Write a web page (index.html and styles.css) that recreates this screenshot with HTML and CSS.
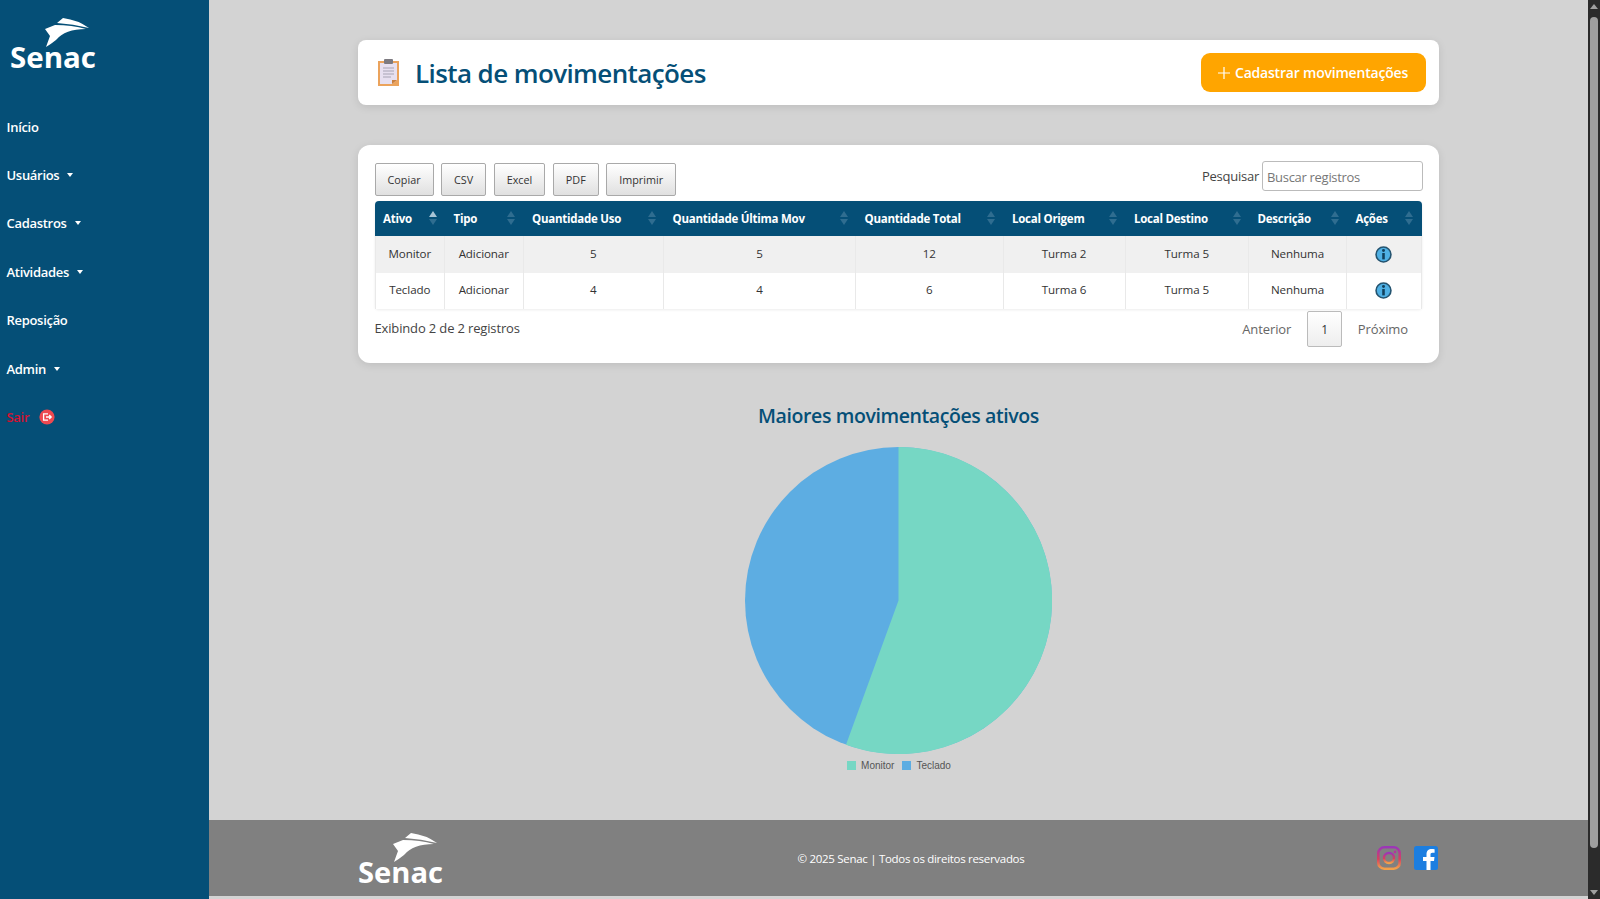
FILE: index.html
```html
<!DOCTYPE html>
<html lang="pt-BR">
<head>
    <meta charset="UTF-8">
    <meta name="viewport" content="width=device-width, initial-scale=1.0">
    <title>Lista de movimentações</title>
    <link rel="stylesheet" href="styles.css">
</head>
<body>
    <aside class="sidebar">
        <div class="sidebar-logo">
            <svg class="logo" viewBox="0 0 90 61" width="90" height="61">
                <path d="M47 6 L53 1 Q68 3 79 11 Q63 7 47 6 Z" fill="#fff"/>
                <path d="M35 12 L45 8 Q62 8 76 12 Q55 12 46 23 Q41 27 36 30 L40 19 Z" fill="#fff"/>
                <text x="0" y="51" font-size="29" textLength="86" lengthAdjust="spacingAndGlyphs" class="logo-text">Senac</text>
            </svg>
        </div>
        <nav class="nav">
            <a class="nav-link">Início</a>
            <a class="nav-link caret">Usuários</a>
            <a class="nav-link caret">Cadastros</a>
            <a class="nav-link caret">Atividades</a>
            <a class="nav-link">Reposição</a>
            <a class="nav-link caret">Admin</a>
            <a class="nav-link nav-exit">Sair
                <svg viewBox="0 0 16 16" width="16" height="16">
                    <circle cx="8" cy="8" r="7.6" fill="#ee4950"/>
                    <path d="M9 4.8H4.6v6.4H9M7 8h5M10.2 6l2 2-2 2" fill="none" stroke="#fff" stroke-width="1.3"/>
                </svg>
            </a>
        </nav>
    </aside>

    <div class="main">
        <div class="content">
            <div class="card title-card">
                <div class="title-left">
                    <svg viewBox="0 0 21 27" width="21" height="27">
                        <rect x="0" y="2" width="21" height="25" fill="#eba35c"/>
                        <path d="M2 4H19V21L14 25H2Z" fill="#e7e0f0"/>
                        <path d="M14 25L19 21H14Z" fill="#c9803f"/>
                        <rect x="6" y="0" width="9" height="5" rx="1" fill="#7d7a80"/>
                        <path d="M5 9H16M5 12H16M5 15H16M5 18H13" stroke="#a7a4b4" stroke-width="1"/>
                    </svg>
                    <h1>Lista de movimentações</h1>
                </div>
                <button class="btn-add">
                    <svg viewBox="0 0 12 12" width="12" height="12"><path d="M6 0V12M0 6H12" stroke="#fff" stroke-width="1.2"/></svg>
                    Cadastrar movimentações
                </button>
            </div>

            <div class="card table-card">
                <div class="toolbar">
                    <div class="export-buttons">
                        <button class="btn-export">Copiar</button>
                        <button class="btn-export">CSV</button>
                        <button class="btn-export">Excel</button>
                        <button class="btn-export">PDF</button>
                        <button class="btn-export">Imprimir</button>
                    </div>
                    <label class="search">Pesquisar <input type="text" placeholder="Buscar registros"></label>
                </div>

                <table class="data-table">
                    <colgroup>
                        <col class="col-1"><col class="col-2"><col class="col-3"><col class="col-4"><col class="col-5">
                        <col class="col-6"><col class="col-7"><col class="col-8"><col class="col-9">
                    </colgroup>
                    <thead>
                        <tr>
                            <th class="sorted">Ativo</th>
                            <th>Tipo</th>
                            <th>Quantidade Uso</th>
                            <th>Quantidade Última Mov</th>
                            <th>Quantidade Total</th>
                            <th>Local Origem</th>
                            <th>Local Destino</th>
                            <th>Descrição</th>
                            <th>Ações</th>
                        </tr>
                    </thead>
                    <tbody>
                        <tr class="odd">
                            <td>Monitor</td><td>Adicionar</td><td>5</td><td>5</td><td>12</td><td>Turma 2</td><td>Turma 5</td><td>Nenhuma</td>
                            <td><svg class="info" viewBox="0 0 16 16" width="17" height="17"><circle cx="8" cy="8" r="7" fill="#4fb0e4" stroke="#24536f" stroke-width="1.5"/><circle cx="8" cy="4.3" r="1.4" fill="#123f5a"/><rect x="6.8" y="6.6" width="2.4" height="6" fill="#123f5a"/></svg></td>
                        </tr>
                        <tr>
                            <td>Teclado</td><td>Adicionar</td><td>4</td><td>4</td><td>6</td><td>Turma 6</td><td>Turma 5</td><td>Nenhuma</td>
                            <td><svg class="info" viewBox="0 0 16 16" width="17" height="17"><circle cx="8" cy="8" r="7" fill="#4fb0e4" stroke="#24536f" stroke-width="1.5"/><circle cx="8" cy="4.3" r="1.4" fill="#123f5a"/><rect x="6.8" y="6.6" width="2.4" height="6" fill="#123f5a"/></svg></td>
                        </tr>
                    </tbody>
                </table>

                <div class="table-foot">
                    <span class="table-info">Exibindo 2 de 2 registros</span>
                    <div class="pagination">
                        <span>Anterior</span>
                        <span class="page-current">1</span>
                        <span>Próximo</span>
                    </div>
                </div>
            </div>

            <h2 class="chart-title">Maiores movimentações ativos</h2>
            <svg class="pie" viewBox="0 0 307 307" width="307" height="307">
                <circle cx="153.5" cy="153.5" r="153.5" fill="#5dade2"/>
                <path d="M153.5 153.5V0A153.5 153.5 0 1 1 101 297.7Z" fill="#76d7c4"/>
            </svg>
            <div class="legend">
                <span class="legend-item"><i class="swatch swatch-green"></i>Monitor</span>
                <span class="legend-item"><i class="swatch swatch-blue"></i>Teclado</span>
            </div>
        </div>

        <footer class="footer">
            <div class="footer-inner">
                <svg class="logo footer-logo" viewBox="0 0 90 61" width="90" height="61">
                    <path d="M47 6 L53 1 Q68 3 79 11 Q63 7 47 6 Z" fill="#fff"/>
                    <path d="M35 12 L45 8 Q62 8 76 12 Q55 12 46 23 Q41 27 36 30 L40 19 Z" fill="#fff"/>
                    <text x="0" y="51" font-size="29" textLength="85" lengthAdjust="spacingAndGlyphs" class="logo-text">Senac</text>
                </svg>
                <span class="copyright">© 2025 Senac | Todos os direitos reservados</span>
                <div class="social">
                    <svg viewBox="0 0 24 24" width="24" height="24">
                        <defs>
                            <linearGradient id="ig" x1="0" y1="0" x2="0" y2="1">
                                <stop offset="0" stop-color="#9b36b7"/>
                                <stop offset="0.55" stop-color="#d8405f"/>
                                <stop offset="1" stop-color="#f2a14a"/>
                            </linearGradient>
                        </defs>
                        <rect x="1.3" y="1.3" width="21.4" height="21.4" rx="6" fill="none" stroke="url(#ig)" stroke-width="2.6"/>
                        <circle cx="12" cy="12" r="5" fill="none" stroke="url(#ig)" stroke-width="2.4"/>
                        <circle cx="18" cy="6" r="1.4" fill="#b4359e"/>
                    </svg>
                    <svg viewBox="0 0 24 24" width="24" height="24">
                        <rect width="24" height="24" rx="2.5" fill="#1c7ee0"/>
                        <path d="M16.5 24V15H20L20.5 11H16.5V8.6C16.5 7.4 17 6.7 18.4 6.7H20.6V3.2C20 3.1 18.8 3 17.6 3 14.6 3 12.5 4.8 12.5 8.1V11H9V15H12.5V24Z" fill="#fff"/>
                    </svg>
                </div>
            </div>
        </footer>
    </div>

    <div class="scrollbar">
        <span class="arrow-up"></span>
        <span class="thumb"></span>
        <span class="arrow-down"></span>
    </div>
</body>
</html>
```

FILE: styles.css
```css
* {
    box-sizing: border-box;
}
html, body {
    height: 899px;
    margin: 0;
    overflow: hidden;
}
body {
    display: flex;
    font-family: "Open Sans", "Noto Sans", Arial, sans-serif;
    background-color: #d3d3d3;
    color: #333;
}

/* menu lateral */
.sidebar {
    width: 208.5px;
    flex-shrink: 0;
    background-color: #054f77;
}
.sidebar-logo {
    height: 102.4px;
    padding: 17px 0 0 10px;
}
.logo {
    display: block;
}
.logo-text {
    font-family: "Open Sans", Arial, sans-serif;
    font-weight: 700;
    fill: #fff;
}
.nav {
    display: flex;
    flex-direction: column;
}
.nav-link {
    display: flex;
    align-items: center;
    height: 48.4px;
    padding-left: 6.5px;
    font-size: 13px;
    letter-spacing: -0.3px;
    font-weight: 600;
    color: #fff;
}
.caret::after {
    content: "";
    margin-left: 8px;
    border-top: 4px solid #fff;
    border-left: 3.5px solid transparent;
    border-right: 3.5px solid transparent;
}
.nav-exit {
    color: #d21230;
    gap: 10px;
}
.nav-exit svg {
    margin-top: 1px;
}

/* area principal */
.main {
    flex: 1;
    display: flex;
    flex-direction: column;
    min-width: 0;
}
.content {
    width: 1081px;
    margin-left: 149.5px;
    padding-top: 40px;
    display: flex;
    flex-direction: column;
    align-items: center;
}
.card {
    width: 100%;
    background-color: #fff;
    border-radius: 8px;
    box-shadow: 0 2px 8px rgba(0, 0, 0, 0.1);
}
.title-card {
    height: 65px;
    display: flex;
    align-items: center;
    justify-content: space-between;
    padding: 0 13.5px 0 20px;
}
.title-left {
    display: flex;
    align-items: center;
    gap: 16px;
}
h1 {
    margin: 0;
    font-size: 26px;
    letter-spacing: -0.6px;
    font-weight: 600;
    color: #054f77;
}
.btn-add {
    width: 225px;
    height: 38.5px;
    display: flex;
    align-items: center;
    justify-content: center;
    gap: 5px;
    border: 0;
    border-radius: 9px;
    background-color: #ffa500;
    color: #fff;
    font-family: inherit;
    font-size: 14px;
    letter-spacing: -0.2px;
    font-weight: 600;
}

/* tabela */
.table-card {
    margin-top: 40px;
    height: 218px;
    padding: 16px 16.5px;
    border-radius: 12px;
}
.toolbar {
    height: 40px;
    display: flex;
    justify-content: space-between;
    align-items: flex-start;
}
.export-buttons {
    display: flex;
    gap: 7.5px;
    margin-top: 2px;
}
.btn-export {
    height: 33px;
    padding: 0 12px;
    border: 1px solid #a9a9a9;
    border-radius: 2px;
    background: linear-gradient(#fff, #e0e0e0);
    color: #333;
    font-family: inherit;
    font-size: 10.8px;
}
.search {
    display: flex;
    align-items: center;
    gap: 3px;
    font-size: 13px;
    letter-spacing: -0.25px;
    color: #444;
}
.search input {
    width: 160.5px;
    height: 30px;
    padding: 1px 4px 0;
    border: 1px solid #bbb;
    border-radius: 3px;
    font-family: inherit;
    font-size: 13px;
    letter-spacing: -0.3px;
}
.search input::placeholder {
    color: #777;
}
.data-table {
    width: 1047px;
    table-layout: fixed;
    border-collapse: separate;
    border-spacing: 0;
    box-shadow: 0 1px 3px rgba(0, 0, 0, 0.08);
    border-radius: 4px;
}
.col-1 { width: 70.5px; }
.col-2 { width: 78.5px; }
.col-3 { width: 140.5px; }
.col-4 { width: 192px; }
.col-5 { width: 147.5px; }
.col-6 { width: 122px; }
.col-7 { width: 123.5px; }
.col-8 { width: 98px; }
.col-9 { width: 74.5px; }
th {
    position: relative;
    height: 35px;
    padding: 0 8.5px;
    background-color: #054f77;
    color: #fff;
    font-size: 11.5px;
    letter-spacing: -0.25px;
    font-weight: 700;
    text-align: left;
}
th:first-child {
    border-top-left-radius: 4px;
}
th:last-child {
    border-top-right-radius: 4px;
}
/* setas de ordenacao */
th::before, th::after {
    content: "";
    position: absolute;
    right: 8.5px;
    border-left: 4px solid transparent;
    border-right: 4px solid transparent;
}
th::before {
    top: 10px;
    border-bottom: 6.5px solid #2f6d90;
}
th::after {
    top: 18px;
    border-top: 6.5px solid #2f6d90;
}
th.sorted::before {
    border-bottom-color: #a8c4d6;
}
td {
    height: 36.5px;
    padding: 0 0 2px;
    font-size: 11.6px;
    letter-spacing: -0.1px;
    text-align: center;
    color: #333;
    border-right: 1px solid #e9e9e9;
    background-color: #fff;
}
td:first-child {
    border-left: 1px solid #e9e9e9;
}
.odd td {
    background-color: #f0f0f0;
}
.info {
    display: block;
    margin: 2px auto 0;
}
.table-foot {
    display: flex;
    justify-content: space-between;
    margin-top: 3px;
}
.table-info {
    font-size: 13px;
    letter-spacing: -0.15px;
    color: #444;
    margin-top: 7px;
}
.pagination {
    display: flex;
    align-items: center;
    gap: 16px;
    padding-right: 14.5px;
    margin-top: -1px;
    font-size: 13px;
    letter-spacing: -0.1px;
    color: #666;
}
.page-current {
    width: 34.5px;
    height: 36px;
    display: flex;
    align-items: center;
    justify-content: center;
    border: 1px solid #bbb;
    border-radius: 2px;
    background: linear-gradient(#fff, #eee);
    color: #333;
    font-size: 12px;
}

/* grafico */
.chart-title {
    margin: 38px 0 0;
    height: 30px;
    line-height: 30px;
    font-size: 19.5px;
    letter-spacing: -0.4px;
    font-weight: 600;
    color: #054f77;
}
.pie {
    display: block;
    margin-top: 15.5px;
}
.legend {
    display: flex;
    gap: 8px;
    margin-top: 6.5px;
    margin-left: 1px;
    font-family: "Liberation Sans", Arial, sans-serif;
    font-size: 10px;
    color: #555;
}
.legend-item {
    display: flex;
    align-items: center;
    gap: 5px;
}
.swatch {
    width: 9px;
    height: 9px;
}
.swatch-green {
    background-color: #76d7c4;
}
.swatch-blue {
    background-color: #5dade2;
}

/* rodape */
.footer {
    margin-top: auto;
    margin-bottom: 3px;
    height: 76px;
    background-color: #808080;
}
.footer-inner {
    width: 1081px;
    height: 100%;
    margin-left: 149.5px;
    display: flex;
    align-items: center;
    justify-content: space-between;
    color: #fff;
}
.footer-logo {
    margin-top: 9px;
}
.copyright {
    font-size: 11.5px;
    letter-spacing: -0.3px;
    margin-left: -3px;
}
.social {
    display: flex;
    gap: 13px;
    margin-right: 1px;
}

/* barra de rolagem */
.scrollbar {
    position: relative;
    width: 12px;
    flex-shrink: 0;
    background-color: #2b2b2b;
}
.arrow-up, .arrow-down {
    position: absolute;
    left: 2px;
    border-left: 4px solid transparent;
    border-right: 4px solid transparent;
}
.arrow-up {
    top: 4px;
    border-bottom: 5px solid #a0a0a0;
}
.arrow-down {
    bottom: 4px;
    border-top: 5px solid #a0a0a0;
}
.thumb {
    position: absolute;
    top: 17px;
    left: 2px;
    width: 8px;
    height: 831px;
    border-radius: 4px;
    background-color: #9f9f9f;
}
```
